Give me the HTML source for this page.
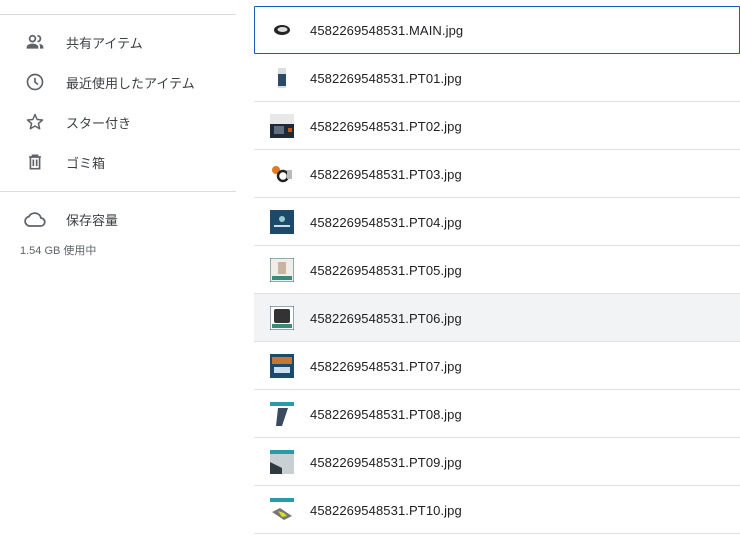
<!DOCTYPE html>
<html><head><meta charset="utf-8"><style>
body{margin:0;width:740px;height:538px;background:#fff;font-family:"Liberation Sans","Noto Sans CJK JP",sans-serif;position:relative;overflow:hidden;color:#3c4043}
.abs{position:absolute}
.hr{position:absolute;left:0;width:236px;height:1px;background:#dadce0}
.nav{position:absolute;left:66px;font-size:13px;color:#3c4043}
.ic{position:absolute;left:25px;width:20px;height:20px}
.row{position:absolute;left:254px;width:486px;height:47px;border-bottom:1px solid #e0e0e0}
.row .t{position:absolute;left:56px;top:17px;font-size:13px;color:#202124;letter-spacing:0.1px}
.row .th{position:absolute;left:16px;top:12px;width:24px;height:24px}
</style></head><body>
<div class="hr" style="top:14px"></div>
<svg class="ic" style="top:32px" viewBox="0 0 24 24"><circle cx="9" cy="8" r="3.5" fill="none" stroke="#5f6368" stroke-width="2.2"/><path d="M2 20v-2c0-2.5 4-4 7-4s7 1.5 7 4v2z" fill="#5f6368"/><path d="M15 4.5a3.3 3.3 0 010 7" fill="none" stroke="#5f6368" stroke-width="2.2"/><path d="M17 14c2 .6 5 1.8 5 4v2h-4v-2c0-1.5-.5-3-1-4z" fill="#5f6368"/></svg>
<div class="nav" style="top:33px">共有アイテム</div>
<svg class="ic" style="top:72px" viewBox="0 0 24 24"><circle cx="12" cy="12" r="9" fill="none" stroke="#5f6368" stroke-width="2"/><path d="M12 7v5l3.5 3" fill="none" stroke="#5f6368" stroke-width="2"/></svg>
<div class="nav" style="top:73px">最近使用したアイテム</div>
<svg class="ic" style="top:112px" viewBox="0 0 24 24"><path d="M12 3l2.6 6 6.4.6-4.9 4.2 1.5 6.3L12 16.8 6.4 20.1l1.5-6.3L3 9.6l6.4-.6z" fill="none" stroke="#5f6368" stroke-width="1.8" stroke-linejoin="round"/></svg>
<div class="nav" style="top:113px">スター付き</div>
<svg class="ic" style="top:152px" viewBox="0 0 24 24"><path d="M5 6h14M9 6V4h6v2M6.5 6v14h11V6M10 9v8M14 9v8" fill="none" stroke="#5f6368" stroke-width="2"/></svg>
<div class="nav" style="top:153px">ゴミ箱</div>
<div class="hr" style="top:191px"></div>
<svg class="ic" style="top:207px;left:23px;width:24px;height:24px" viewBox="0 0 24 24"><path d="M6.5 19h11a4 4 0 00.5-8A6.5 6.5 0 006 9.5 4.8 4.8 0 006.5 19z" fill="none" stroke="#5f6368" stroke-width="1.8"/></svg>
<div class="nav" style="top:210px">保存容量</div>
<div class="abs" style="left:20px;top:242px;font-size:11px;color:#5f6368">1.54 GB 使用中</div>

<div class="abs" style="left:254px;top:6px;width:484px;height:46px;border:1px solid #1a57c0;border-radius:1px"></div>
<div class="row" style="top:6px;border:none"><svg class="th" viewBox="0 0 24 24"><ellipse cx="12" cy="12" rx="8" ry="5" fill="#222"/><ellipse cx="12.5" cy="11.5" rx="5" ry="2.5" fill="#ddd"/></svg><div class="t">4582269548531.MAIN.jpg</div></div>
<div class="row" style="top:54px"><svg class="th" viewBox="0 0 24 24"><rect x="8" y="2" width="8" height="20" fill="#d8dde2"/><rect x="8" y="8" width="8" height="12" fill="#2e4a6a"/></svg><div class="t">4582269548531.PT01.jpg</div></div>
<div class="row" style="top:102px"><svg class="th" viewBox="0 0 24 24"><rect x="0" y="0" width="24" height="24" fill="#e8e8e8"/><rect x="0" y="10" width="24" height="14" fill="#1f2a38"/><rect x="4" y="12" width="10" height="8" fill="#607080"/><rect x="18" y="14" width="4" height="4" fill="#c05a20"/></svg><div class="t">4582269548531.PT02.jpg</div></div>
<div class="row" style="top:150px"><svg class="th" viewBox="0 0 24 24"><circle cx="6" cy="8" r="4" fill="#e07a20"/><circle cx="13" cy="14" r="5" fill="none" stroke="#222" stroke-width="2.5"/><rect x="17" y="8" width="5" height="9" fill="#bbb"/></svg><div class="t">4582269548531.PT03.jpg</div></div>
<div class="row" style="top:198px"><svg class="th" viewBox="0 0 24 24"><rect width="24" height="24" fill="#1d4a6a"/><circle cx="12" cy="9" r="3" fill="#9cc"/><rect x="4" y="15" width="16" height="2" fill="#cde"/></svg><div class="t">4582269548531.PT04.jpg</div></div>
<div class="row" style="top:246px"><svg class="th" viewBox="0 0 24 24"><rect width="24" height="24" fill="#f0eeea" stroke="#2e6a6a"/><rect x="8" y="4" width="8" height="12" fill="#c8b4a0"/><rect x="2" y="18" width="20" height="4" fill="#3a8a7a"/></svg><div class="t">4582269548531.PT05.jpg</div></div>
<div class="row" style="top:294px;background:#f1f3f4"><svg class="th" viewBox="0 0 24 24"><rect width="24" height="24" fill="#fff" stroke="#2e4a6a"/><rect x="4" y="3" width="16" height="14" rx="2" fill="#333"/><rect x="2" y="18" width="20" height="4" fill="#3a8a7a"/></svg><div class="t">4582269548531.PT06.jpg</div></div>
<div class="row" style="top:342px"><svg class="th" viewBox="0 0 24 24"><rect width="24" height="24" fill="#1d4a6a"/><rect x="2" y="3" width="20" height="7" fill="#c8782a"/><rect x="4" y="13" width="16" height="6" fill="#cde"/></svg><div class="t">4582269548531.PT07.jpg</div></div>
<div class="row" style="top:390px"><svg class="th" viewBox="0 0 24 24"><rect width="24" height="4" fill="#2a9aa8"/><path d="M8 6h10l-6 18h-6z" fill="#3a4a60"/></svg><div class="t">4582269548531.PT08.jpg</div></div>
<div class="row" style="top:438px"><svg class="th" viewBox="0 0 24 24"><rect width="24" height="4" fill="#2a9aa8"/><rect y="4" width="24" height="20" fill="#c8d0d4"/><path d="M0 12l12 6v6H0z" fill="#303a40"/></svg><div class="t">4582269548531.PT09.jpg</div></div>
<div class="row" style="top:486px"><svg class="th" viewBox="0 0 24 24"><rect width="24" height="4" fill="#2a9aa8"/><path d="M2 14l8-4 12 8-8 4z" fill="#777"/><path d="M8 13l6 2 3 3-5 1z" fill="#d8e020"/></svg><div class="t">4582269548531.PT10.jpg</div></div>
</body></html>
